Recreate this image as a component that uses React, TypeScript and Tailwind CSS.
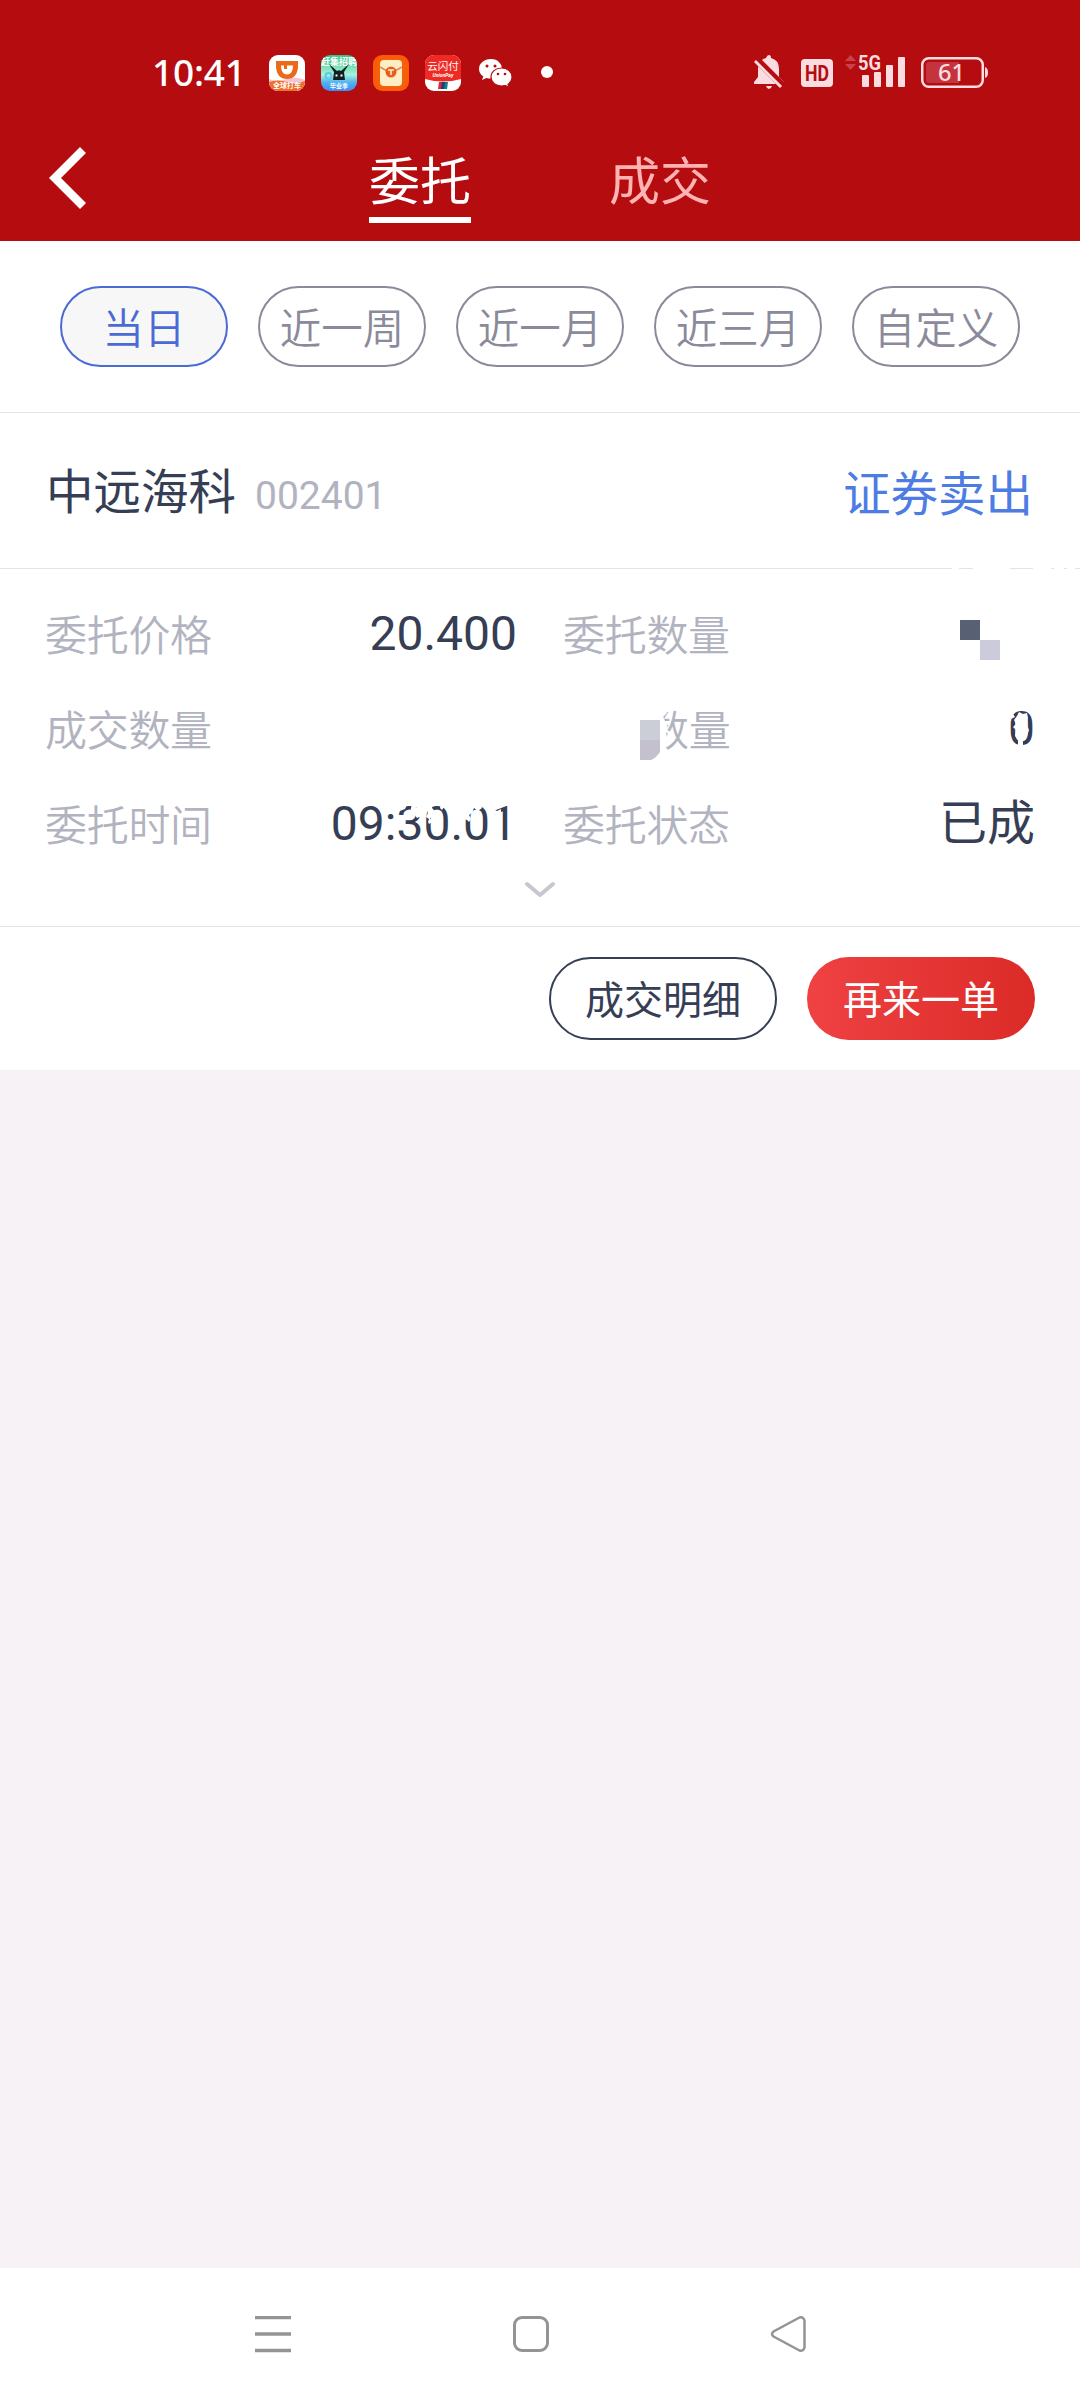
import clsx from "clsx";

const ranges = ["当日", "近一周", "近一月", "近三月", "自定义"];

const StatusBar = () => (
  <div className="flex h-[120px] pt-[55px] pl-[152px]">
    <span className="-mt-[8px] w-[117px] font-['Noto_Sans',sans-serif] text-[37px] leading-[50px] font-medium tracking-[-0.2px] text-white">
      10:41
    </span>
    <div className="flex gap-4">
      <svg width="36" height="36" viewBox="0 0 36 36">
        <defs>
          <clipPath id="app-mask">
            <rect width="36" height="36" rx="9" />
          </clipPath>
          <linearGradient id="teal" x1="0" y1="0" x2="0" y2="1">
            <stop offset="0" stopColor="#35c285" />
            <stop offset="0.55" stopColor="#a5f3dc" />
            <stop offset="0.75" stopColor="#55b4f0" />
            <stop offset="1" stopColor="#3e8df0" />
          </linearGradient>
        </defs>
        <g clipPath="url(#app-mask)">
          <rect width="36" height="36" fill="#fff" />
          <path d="M0 24q8 3 18 0t18 1v11H0z" fill="#f4c3d4" />
          <path d="M0 27q9-3 18 0t18-1v10H0z" fill="#ef6f2c" />
          <path
            d="M7 6h22v6q-1 12-11 12T7 12z M12 10.500q0 9 6 9t6-9h-6v3.500h-3v-3.500z"
            fill="#ea6a1a"
            fillRule="evenodd"
          />
          <text x="18" y="32.500" fontSize="7" fontWeight="700" fill="#fff" textAnchor="middle">
            全球打车
          </text>
        </g>
      </svg>
      <svg width="36" height="36" viewBox="0 0 36 36">
        <g clipPath="url(#app-mask)">
          <rect width="36" height="36" fill="url(#teal)" />
          <circle cx="7.500" cy="21" r="3" fill="none" stroke="#5cc8e8" strokeWidth="2" />
          <text x="18" y="10" fontSize="9" fontWeight="700" fill="#fff" textAnchor="middle">
            赶集招聘
          </text>
          <path d="M8 9l8 7q2-1.500 4 0l8-7-5 8 1 8H12l1-8z" fill="#10201f" />
          <path d="M14.500 20.500h2M19.500 20.500h2" stroke="#fff" strokeWidth="2" />
          <text x="18" y="33" fontSize="6" fontWeight="700" fill="#fff" textAnchor="middle">
            毕业季
          </text>
        </g>
      </svg>
      <svg width="36" height="36" viewBox="0 0 36 36">
        <rect width="36" height="36" rx="9" fill="#fb5a07" />
        <rect x="3" y="3" width="30" height="30" rx="7" fill="#f4600c" />
        <rect x="7" y="5" width="22" height="26" rx="4" fill="#feeec6" />
        <path d="M7 12l7 4h8l7-4" fill="none" stroke="#e0884a" strokeWidth="1.500" />
        <circle cx="18" cy="17" r="5.500" fill="#e8601c" />
        <path d="M15 15h6M18 15v5" stroke="#fff0d0" strokeWidth="1.500" />
      </svg>
      <svg width="36" height="36" viewBox="0 0 36 36">
        <g clipPath="url(#app-mask)">
          <rect width="36" height="36" fill="#fff" />
          <path d="M0 0h36v24q-18 5-36 0z" fill="#ee2a25" />
          <text x="18" y="15" fontSize="10.500" fill="#fff" textAnchor="middle">
            云闪付
          </text>
          <text x="18" y="21.500" fontSize="5" fontStyle="italic" fontWeight="700" fill="#fff" textAnchor="middle">
            UnionPay
          </text>
          <path d="M14 27h4l-1 7h-4z" fill="#d42b3c" />
          <path d="M17 27h4l-1 7h-4z" fill="#1d3f7c" />
          <path d="M20 27h3l-1 7h-3z" fill="#0f7f86" />
        </g>
      </svg>
      <svg width="36" height="36" viewBox="0 0 36 36">
        <path
          d="M14 4C7 4 2 8.500 2 14c0 3.200 1.700 5.800 4.300 7.600L5 25l4.500-2c1.400.4 3 .6 4.500.6C21 23.600 25 19 25 14S21 4 14 4z"
          fill="#fff"
        />
        <path
          d="M24.500 13c-6 0-10.500 4-10.500 9s4.500 9 10.500 9c1.300 0 2.400-.2 3.500-.5l4 1.900-1-3.200c2.500-1.700 4-4.300 4-7.200 0-5-4.500-9-10.500-9z"
          fill="#fff"
          stroke="#b50c0f"
          strokeWidth="1.200"
        />
        <g fill="#b50c0f">
          <circle cx="10" cy="11" r="1.500" />
          <circle cx="18" cy="11" r="1.500" />
          <circle cx="21" cy="19" r="1.300" />
          <circle cx="28" cy="19" r="1.300" />
        </g>
      </svg>
    </div>
    <span className="mt-[11px] ml-[28px] size-3 rounded-full bg-white" />
    <svg className="-mt-[5px] ml-[201px]" width="240" height="50" viewBox="0 0 240 50">
      <g fill="#fbdce0">
        <path d="M15 5q2 0 2 3 8 2 8 11v8l5 5v2H0v-2l4-5v-8q0-9 8-11 1-3 3-3zM12 36h6q-1 3-3 3t-3-3z" />
        <path d="M1 8l29 29" stroke="#b50c0f" strokeWidth="7" />
        <path d="M1 11l26 26" stroke="#fbdce0" strokeWidth="3" />
        <rect x="47" y="9" width="32" height="28" rx="4" />
        <text x="63" y="31" textAnchor="middle" fontFamily="Roboto" fontWeight="700" fontSize="22" fill="#b50c0f" textLength="24" lengthAdjust="spacingAndGlyphs">
          HD
        </text>
        <path d="M96.500 5l5.500 6H91zM96.500 20l5.500-6H91z" fill="#c9414a" />
        <text x="104" y="20" fontFamily="Roboto" fontWeight="700" fontSize="20.500" textLength="23" lengthAdjust="spacingAndGlyphs">
          5G
        </text>
        <rect x="108" y="25" width="7" height="12" rx="1" />
        <rect x="120" y="22" width="7" height="15" rx="1" />
        <rect x="132" y="15" width="7" height="22" rx="1" />
        <rect x="144" y="7" width="7" height="30" rx="1" />
        <rect x="168.250" y="8.250" width="60.500" height="28.500" rx="6.500" fill="none" stroke="#fbdce0" strokeWidth="2.500" />
        <path d="M231 17q3 1 3 5.500t-3 5.500z" />
        <path d="M175 12h30v21h-30q-3 0-3-3V15q0-3 3-3z" fill="#c5343d" />
        <text x="197.500" y="31" textAnchor="middle" fontFamily="Noto Sans" fontWeight="500" fontSize="24" textLength="27" lengthAdjust="spacingAndGlyphs">
          61
        </text>
      </g>
    </svg>
  </div>
);

const Header = () => (
  <header className="h-[241px] bg-[#b50c0f]">
    <StatusBar />
    <div className="flex h-[121px]">
      <div className="w-[300px] pt-[27px] pl-[49px]">
        <svg width="38" height="62" viewBox="0 0 38 62">
          <path d="M0 31L31 0l6 6-25 25 25 25-6 6z" fill="#fff" />
        </svg>
      </div>
      <div className="flex w-60 flex-col items-center">
        <span className="mt-[25px] h-[72px] text-[51px] leading-[76px] text-white">委托</span>
        <span className="h-[6px] w-[102px] bg-white" />
      </div>
      <div className="flex w-60 flex-col items-center">
        <span className="mt-[25px] h-[72px] text-[51px] leading-[76px] text-[#ffb3b3]">成交</span>
      </div>
    </div>
  </header>
);

const Label = ({ children }: { children: string }) => (
  <span className="pt-[2px] text-[42px] font-[350] tracking-[-0.3px] text-[#b1b3c0]">{children}</span>
);

const Value = ({ children }: { children: string }) => (
  <span className="pb-[3px] text-[48px] text-[#353e54]">{children}</span>
);

export default function App() {
  return (
    <div className="flex h-[2400px] w-[1080px] flex-col overflow-hidden bg-[#f7f2f6] font-[Roboto,'Noto_Sans_CJK_SC',sans-serif]">
      <Header />
      <main className="bg-white">
        <div className="flex h-[172px] gap-[30px] border-b border-[#e3e3e5] px-[60px] pt-[45px]">
          {ranges.map((range, i) => (
            <button
              key={range}
              className={clsx(
                "h-[81px] w-[168px] rounded-full border-2 pt-[4px] text-[41.500px] leading-[75px] font-[350] whitespace-nowrap",
                i === 0
                  ? "border-[#4a6bd5] bg-[#f7f7f8] text-[#4a6bd5]"
                  : "border-[#8b8a9b] text-[#8b8a9b]",
              )}
            >
              {range}
            </button>
          ))}
        </div>

        <div className="relative flex h-[156px] items-center justify-between border-b border-[#e3e3e5] pt-[8px] pr-[47px] pl-[46px] leading-[60px]">
          <div className="flex items-baseline">
            <span className="text-[47.500px] text-[#353e54]">中远海科</span>
            <span className="ml-[19px] text-[39px] text-[#b1b3c0]">002401</span>
          </div>
          <span className="text-[47.500px] text-[#4d7ce3]">证券卖出</span>
          <svg className="absolute right-0 -bottom-px" width="130" height="1">
            <path d="M2 .5h7M23 .5h37M83 .5h18M104 .5h10M117 .5h8" stroke="#fff" />
          </svg>
        </div>

        <div className="h-[358px] border-b border-[#e3e3e5] pt-[19px] pr-[45px] pl-[45px]">
          <div className="relative grid auto-rows-[95px] grid-cols-[472px_472px] items-center gap-x-[46px]">
            <div className="flex items-center justify-between">
              <Label>委托价格</Label>
              <Value>20.400</Value>
            </div>
            <div className="flex items-center justify-between">
              <Label>委托数量</Label>
            </div>
            <div className="flex items-center justify-between">
              <Label>成交数量</Label>
            </div>
            <div className="flex items-center justify-between pl-[84px]">
              <Label>数量</Label>
              <Value>0</Value>
            </div>
            <div className="flex items-center justify-between">
              <Label>委托时间</Label>
              <Value>09:30.01</Value>
            </div>
            <div className="flex items-center justify-between">
              <Label>委托状态</Label>
              <Value>已成</Value>
            </div>
            {/* mosaic and eraser strokes over the private figures */}
            <svg className="absolute top-0 left-0" width="990" height="285" viewBox="45 588 990 285">
              <path d="M960 620h20v20h-20z" fill="#586173" />
              <path d="M980 640h20v20h-20z" fill="#cbcbdc" />
              <g fill="#fff">
                <path d="M640 705h25l2 8-4 4 4 8-1 8 2 8-2 5-3 5 2 4-4 4-21 1z" />
                <path d="M412 803h3l1 5 3-2 4 2-1 8-5 2-3-4-4-1 1-5z" />
                <path d="M403 803l4 2-2 4-5 2z" />
                <path d="M427 803l6 1-1 4 3 3-3 2 1 4-3 1 2 4-3 2-1-2 1-3-3-2 2-4zM441 803l3 4-2 3-2-2z" />
                <path d="M465 803h15l2 5-4 3-4-3-2 5-3 2 2 4-2 3-2-2-3-1zM493 809l4 2 4-2v4l-8 2z" />
                <path d="M1019 712l4 2 4-1 1 5-1 7 2 5-2 6-4 4v6h-5v-6l-3-4 1-6-3-3 3-3-2-4 3-4z" />
                <path d="M1008 710h6l-1 4 2 3-4 2z" />
              </g>
              <path d="M640 720h20v20h-20z" fill="#cbced7" />
              <path d="M640 740h20v12q-3 5-9 8h-11z" fill="#c4c0cd" />
            </svg>
          </div>
          <svg className="mx-auto mt-[8px]" width="32" height="17" viewBox="0 0 32 17">
            <path d="M3 3l13 11L29 3" fill="none" stroke="#c7c7d0" strokeWidth="4" strokeLinecap="round" strokeLinejoin="round" />
          </svg>
        </div>

        <div className="flex h-[143px] justify-end gap-[30px] pt-[30px] pr-[45px] text-[39px] leading-[78px]">
          <button className="h-[83px] w-[228px] rounded-full border-2 border-[#353e54] pt-[5px] leading-[75px] text-[#353e54]">
            成交明细
          </button>
          <button className="h-[83px] w-[228px] rounded-full bg-linear-to-r from-[#f04143] to-[#db2b27] pt-[5px] text-white">
            再来一单
          </button>
        </div>
      </main>

      <nav className="mt-auto flex h-[132px] bg-white pt-[48px] pl-[255px]">
        <svg width="552" height="37" viewBox="0 0 552 37" fill="none" stroke="#949494">
          <path d="M0 1.500h36M0 18h36M0 34.500h36" strokeWidth="3.500" />
          <rect x="259.500" y="1.500" width="33" height="33" rx="7.500" strokeWidth="3" />
          <path d="M518.500 15.500l26-14q4-1 5 3v27q-1 4-5 3l-26-14q-3-2.500 0-5z" strokeWidth="2.500" strokeLinejoin="round" />
        </svg>
      </nav>
    </div>
  );
}
